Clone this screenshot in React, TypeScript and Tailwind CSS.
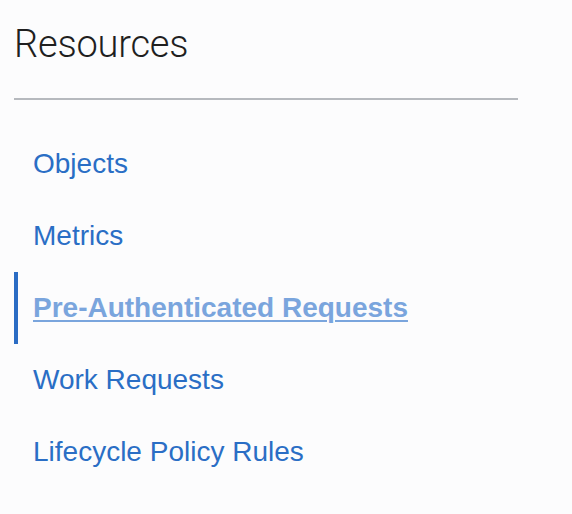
import React from "react";

const items = [
  { label: "Objects", active: false },
  { label: "Metrics", active: false },
  { label: "Pre-Authenticated Requests", active: true },
  { label: "Work Requests", active: false },
  { label: "Lifecycle Policy Rules", active: false },
];

export default function App() {
  return (
    <div
      className="min-h-screen w-full bg-[#fcfcfd] pl-[14px] pt-[22px]"
      style={{ fontFamily: '"Liberation Sans", Arial, sans-serif' }}
    >
      <h2
        className="text-[38px] leading-[44px] font-light text-[#1f1f1f] tracking-[-0.2px]"
        style={{ fontFamily: 'Roboto, "Liberation Sans", sans-serif' }}
      >
        Resources
      </h2>
      <div className="mt-[32px] h-[2px] w-[504px] bg-[#b6b9be]" />
      <nav className="mt-[28px] flex flex-col">
        {items.map((it) =>
          it.active ? (
            <div
              key={it.label}
              className="flex h-[72px] items-center border-l-4 border-[#2b6cc4] pl-[15px]"
            >
              <a
                href="#"
                className="text-[28px] font-bold text-[#7aa5dd] underline decoration-2 underline-offset-[3px]"
              >
                {it.label}
              </a>
            </div>
          ) : (
            <div key={it.label} className="flex h-[72px] items-center pl-[19px]">
              <a href="#" className="text-[28px] text-[#2a6ec5]">
                {it.label}
              </a>
            </div>
          )
        )}
      </nav>
    </div>
  );
}
